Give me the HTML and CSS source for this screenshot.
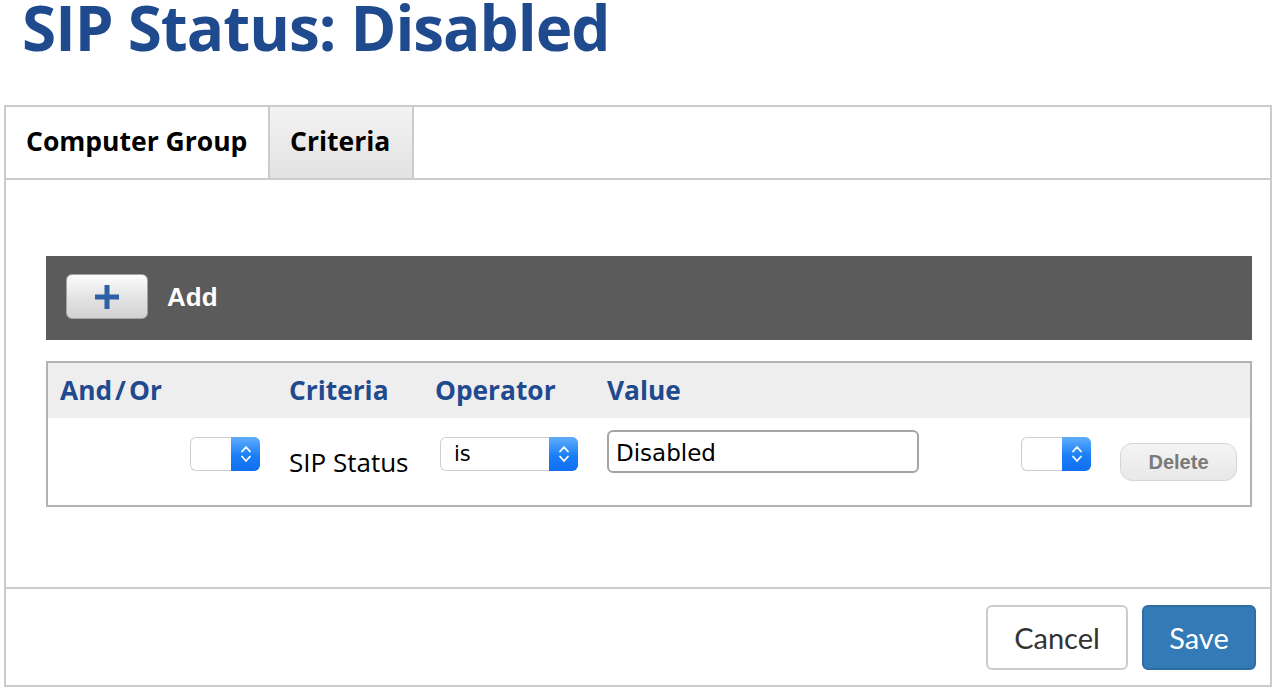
FILE: index.html
```html
<!DOCTYPE html>
<html>
<head>
<meta charset="utf-8">
<link rel="stylesheet" href="styles.css">
</head>
<body>
<h1 class="title">SIP Status: Disabled</h1>
<div class="panel">
  <div class="tabs">
    <div class="tab">Computer Group</div>
    <div class="tab tab-alt">Criteria</div>
  </div>
  <div class="content">
    <div class="toolbar">
      <button class="add-btn" type="button">
        <svg width="26" height="26" viewBox="0 0 26 26"><path d="M10.5 1h5v9.5H25v5h-9.5V25h-5v-9.5H1v-5h9.5z" fill="#2c5fa6"/></svg>
      </button>
      <span class="add-label">Add</span>
    </div>
    <div class="criteria">
      <div class="crit-head">
        <div class="hcell c1">And<span class="slash">/</span>Or</div>
        <div class="hcell">Criteria</div>
        <div class="hcell">Operator</div>
        <div class="hcell">Value</div>
        <div class="hcell"></div>
        <div class="hcell"></div>
      </div>
      <div class="crit-row">
        <div class="cell c1 right">
          <div class="mselect sm"><span class="mtext"></span><span class="stepper"><svg width="12" height="20" viewBox="0 0 12 20"><path d="M2 7.5l4-4.5 4 4.5M2 12.5l4 4.5 4-4.5" fill="none" stroke="#fff" stroke-width="1.8" stroke-linecap="round" stroke-linejoin="round"/></svg></span></div>
        </div>
        <div class="cell text-cell">SIP Status</div>
        <div class="cell">
          <div class="mselect op"><span class="mtext">is</span><span class="stepper"><svg width="12" height="20" viewBox="0 0 12 20"><path d="M2 7.5l4-4.5 4 4.5M2 12.5l4 4.5 4-4.5" fill="none" stroke="#fff" stroke-width="1.8" stroke-linecap="round" stroke-linejoin="round"/></svg></span></div>
        </div>
        <div class="cell value-cell">
          <div class="vinput">Disabled</div>
        </div>
        <div class="cell">
          <div class="mselect sm"><span class="mtext"></span><span class="stepper"><svg width="12" height="20" viewBox="0 0 12 20"><path d="M2 7.5l4-4.5 4 4.5M2 12.5l4 4.5 4-4.5" fill="none" stroke="#fff" stroke-width="1.8" stroke-linecap="round" stroke-linejoin="round"/></svg></span></div>
        </div>
        <div class="cell del-cell">
          <button class="del-btn" type="button">Delete</button>
        </div>
      </div>
    </div>
  </div>
  <div class="footer">
    <button class="btn cancel" type="button">Cancel</button>
    <button class="btn save" type="button">Save</button>
  </div>
</div>
</body>
</html>
```
FILE: styles.css
```css
html, body {
  margin: 0;
  padding: 0;
  background: #fff;
}
body {
  padding: 0 4px;
  font-family: "Open Sans", "DejaVu Sans", sans-serif;
  color: #000;
}
.title {
  margin: 0;
  padding-left: 18px;
  height: 105px;
  font-family: "Open Sans", sans-serif;
  font-weight: 700;
  font-size: 62px;
  line-height: 54px;
  color: #1f4a8e;
  letter-spacing: -1px;
}
.panel {
  border: 2px solid #cccccc;
  box-sizing: border-box;
  width: 1268px;
}
.tabs {
  display: flex;
  height: 71px;
  border-bottom: 2px solid #cccccc;
}
.tab {
  width: 264px;
  display: flex;
  align-items: center;
  padding-left: 20px;
  padding-bottom: 3px;
  box-sizing: border-box;
  font-family: "Open Sans", sans-serif;
  font-weight: 700;
  font-size: 26.5px;
  color: #000;
  border-right: 2px solid #cccccc;
}
.tab-alt {
  width: 144px;
  padding-left: 20px;
  background: linear-gradient(#f3f3f3, #e2e2e2);
}
.content {
  padding: 76px 18px 80px 40px;
  border-bottom: 2px solid #cccccc;
}
.toolbar {
  height: 84px;
  background: #5b5b5b;
  display: flex;
  align-items: center;
  padding-left: 20px;
}
.add-btn {
  width: 82px;
  height: 45px;
  border: 1px solid #a4a4a4;
  border-radius: 6px;
  background: linear-gradient(#fdfdfd, #e4e4e4 50%, #d2d2d2);
  display: flex;
  align-items: center;
  justify-content: center;
  padding: 0;
  margin-bottom: 3px;
}
.add-label {
  margin-left: 19px;
  margin-bottom: 2px;
  color: #fff;
  font-family: "Liberation Sans", sans-serif;
  font-weight: 700;
  font-size: 26px;
}
.criteria {
  margin-top: 21px;
  border: 2px solid #b3b3b3;
}
.crit-head, .crit-row {
  display: grid;
  grid-template-columns: 229px 146px 172px 414px 99px 142px;
}
.crit-head {
  height: 55px;
  background: #eeeeee;
  align-items: center;
}
.hcell {
  padding-left: 12px;
  font-family: "Open Sans", sans-serif;
  font-weight: 700;
  font-size: 26.3px;
  color: #1f4a8e;
  padding-bottom: 1px;
  white-space: nowrap;
}
.slash {
  margin: 0 3px;
}
.crit-row {
  height: 87px;
  align-items: start;
}
.cell {
  padding-left: 12px;
}
.cell.right {
  display: flex;
  justify-content: flex-end;
  padding-right: 17px;
}
.mselect {
  margin-top: 19px;
  height: 34px;
  display: flex;
  border-radius: 6px;
  box-sizing: border-box;
  overflow: hidden;
  box-shadow: 0 0 0 1px #cfcfcf inset;
  background: #fff;
}
.mselect.sm {
  width: 70px;
}
.mselect.op {
  width: 138px;
  margin-left: 5px;
}
.mtext {
  flex: 1;
  padding-left: 14px;
  font-family: "DejaVu Sans", sans-serif;
  font-size: 21px;
  line-height: 34px;
}
.stepper {
  width: 29px;
  background: linear-gradient(#62adfb, #1a7ef7 55%, #0f6ff0);
  display: flex;
  align-items: center;
  justify-content: center;
}
.text-cell {
  padding-top: 27px;
  font-family: "Open Sans", sans-serif;
  font-size: 26px;
  line-height: 34px;
  white-space: nowrap;
}
.vinput {
  margin-top: 12px;
  width: 312px;
  height: 43px;
  box-sizing: border-box;
  border: 2px solid #a5a5a5;
  border-radius: 6px;
  padding-left: 7px;
  padding-top: 3px;
  font-family: "DejaVu Sans", sans-serif;
  font-size: 23px;
  line-height: 36px;
}
.del-btn {
  margin-top: 25px;
  width: 117px;
  height: 38px;
  border: 1px solid #d6d6d6;
  border-radius: 12px;
  background: linear-gradient(#f4f4f4, #e8e8e8);
  color: #7a7a7a;
  font-family: "Liberation Sans", sans-serif;
  font-weight: 700;
  font-size: 20px;
  padding: 0;
}
.footer {
  height: 96px;
  display: flex;
  justify-content: flex-end;
  align-items: flex-start;
  padding: 16px 14px 0 0;
  box-sizing: border-box;
  gap: 14px;
}
.btn {
  height: 65px;
  border-radius: 6px;
  font-family: "Lato", sans-serif;
  font-size: 29px;
  padding: 0;
}
.cancel {
  width: 142px;
  border: 2px solid #cccccc;
  background: #fff;
  color: #333;
}
.save {
  width: 114px;
  border: 2px solid #2e6da4;
  background: #337ab7;
  color: #fff;
}
```
